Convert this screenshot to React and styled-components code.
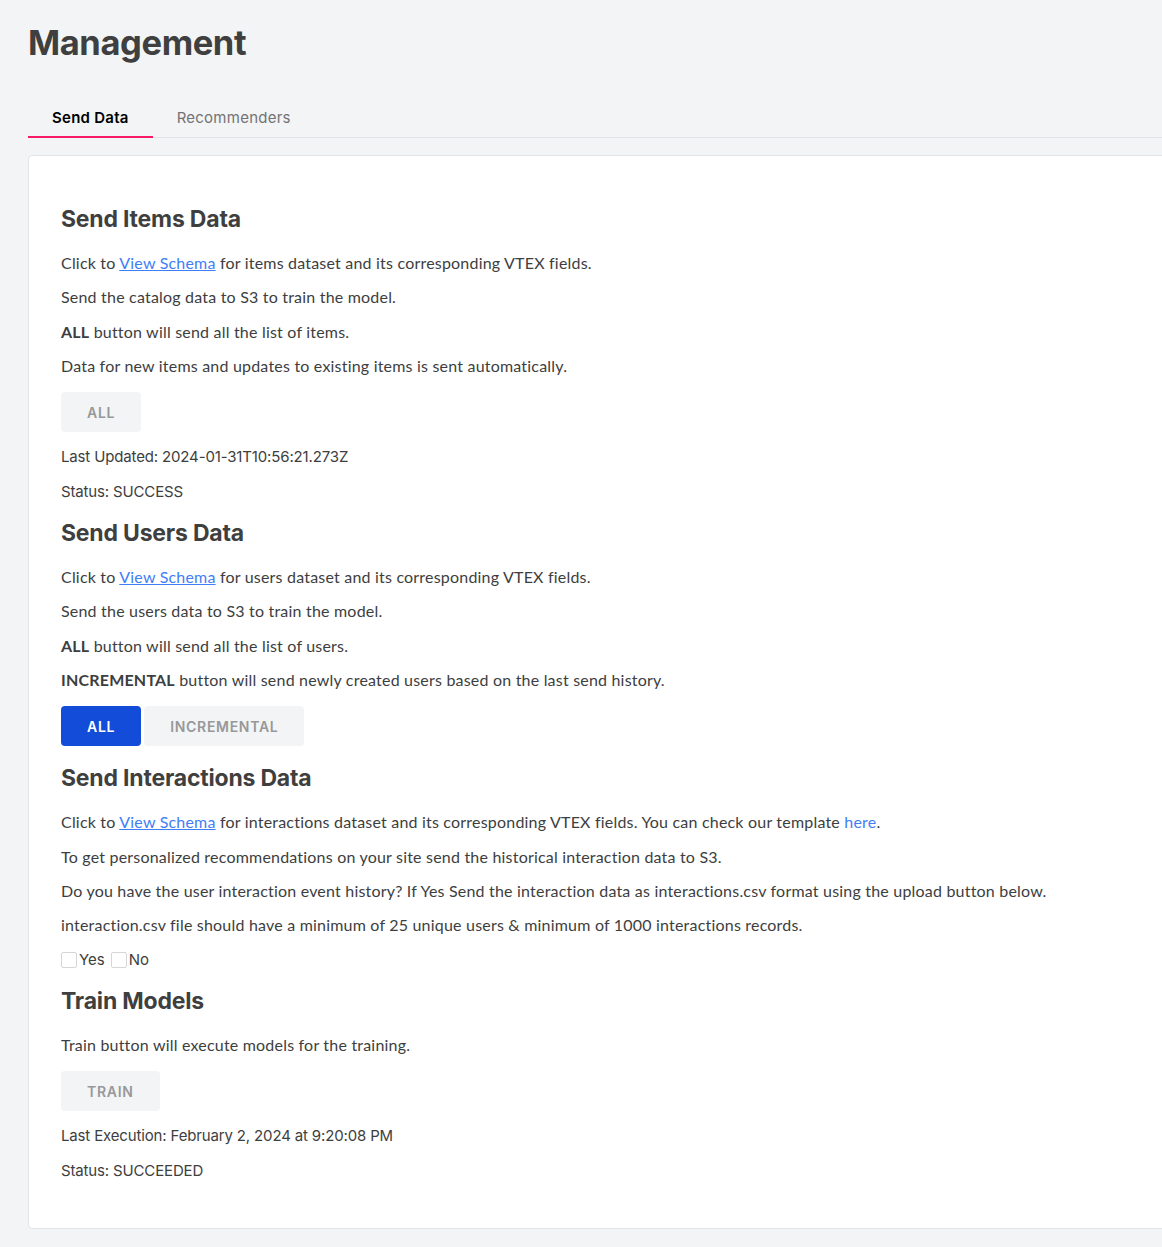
import React from "react";
import styled, { createGlobalStyle } from "styled-components";

const Global = createGlobalStyle`
  html, body { margin: 0; padding: 0; background: #f3f4f6; }
  body { font-family: Lato, "Noto Sans", sans-serif; color: #3d3e40; overflow-x: hidden; }
  * { box-sizing: border-box; }
`;

const Page = styled.div`
  overflow: hidden;
  min-height: 1247px;
  padding: 0 0 19px 28px;
`;

const Inner = styled.div`
  width: 1200px;
`;

const Title = styled.h1`
  margin: 0;
  padding-top: 21px;
  font-size: 34.5px;
  line-height: 44px;
  font-weight: 700;
  color: #3f3f40;
  font-family: Inter, Lato, sans-serif;
  letter-spacing: -0.4px;
`;

const Tabs = styled.div`
  display: flex;
  margin-top: 33px;
  border-bottom: 1px solid #e0e2e7;
`;

const Tab = styled.button`
  border: 0;
  background: none;
  padding: 0 24px;
  height: 40px;
  font-family: Inter, Lato, sans-serif;
  font-size: 15px;
  letter-spacing: 0.25px;
  font-weight: ${(p) => (p.$active ? 600 : 400)};
  color: ${(p) => (p.$active ? "#000" : "#727273")};
  border-bottom: 2px solid ${(p) => (p.$active ? "#f71963" : "transparent")};
  margin-bottom: -1px;
  cursor: pointer;
`;

const Card = styled.div`
  margin-top: 17px;
  background: #fff;
  border: 1px solid #e3e4e6;
  border-radius: 4px;
  padding: 33px 32px 34px;
`;

const ButtonRow = styled.div`
  display: flex;
  gap: 3px;
  margin: 15px 0 14px;
`;

const Heading = styled.h2`
  margin: 16px 0 19px;
  font-family: Inter, Lato, sans-serif;
  font-size: 23px;
  line-height: 28px;
  font-weight: 700;
  color: #3f3f40;
  letter-spacing: -0.2px;

  ${ButtonRow} + & {
    margin-top: 18px;
  }
`;

const P = styled.p`
  margin: 0 0 12px;
  font-size: 16px;
  line-height: 22.33px;
  letter-spacing: 0.2px;
  color: #3d3e40;
`;

const Link = styled.a`
  color: #3f7ef5;
  text-decoration: ${(p) => (p.$plain ? "none" : "underline")};
  cursor: pointer;
`;

const Button = styled.button`
  height: 40px;
  min-width: 80px;
  padding: 0 26px;
  border: 0;
  border-radius: 4px;
  font-family: Inter, Lato, sans-serif;
  font-size: 14px;
  letter-spacing: 0.7px;
  font-weight: 600;
  text-transform: uppercase;
  background: ${(p) => (p.$primary ? "#134cd8" : "#f2f4f5")};
  color: ${(p) => (p.$primary ? "#fff" : "#979899")};
  cursor: ${(p) => (p.$primary ? "pointer" : "default")};
`;

const Meta = styled(P)`
  font-family: Inter, Lato, sans-serif;
  font-size: 15px;
  letter-spacing: -0.15px;
`;

const CheckRow = styled.div`
  display: flex;
  align-items: center;
  height: 22.33px;
  margin-bottom: 12px;
  font-size: 15px;
  color: #3d3e40;
`;

const Box = styled.span`
  width: 16px;
  height: 16px;
  border: 1px solid #d5d6d8;
  border-radius: 2px;
  margin-right: 2px;
  background: #fff;
`;

const CheckLabel = styled.label`
  display: flex;
  align-items: center;
  margin-right: 6px;
  font-family: Inter, Lato, sans-serif;
`;

export default function App() {
  return (
    <Page>
      <Global />
      <Inner>
        <Title>Management</Title>
        <Tabs>
          <Tab $active>Send Data</Tab>
          <Tab>Recommenders</Tab>
        </Tabs>
        <Card>
          <Heading>Send Items Data</Heading>
          <P>
            Click to <Link>View Schema</Link> for items dataset and its corresponding VTEX fields.
          </P>
          <P>Send the catalog data to S3 to train the model.</P>
          <P>
            <b>ALL</b> button will send all the list of items.
          </P>
          <P>Data for new items and updates to existing items is sent automatically.</P>
          <ButtonRow>
            <Button>All</Button>
          </ButtonRow>
          <Meta>Last Updated: 2024-01-31T10:56:21.273Z</Meta>
          <Meta>Status: SUCCESS</Meta>

          <Heading>Send Users Data</Heading>
          <P>
            Click to <Link>View Schema</Link> for users dataset and its corresponding VTEX fields.
          </P>
          <P>Send the users data to S3 to train the model.</P>
          <P>
            <b>ALL</b> button will send all the list of users.
          </P>
          <P>
            <b>INCREMENTAL</b> button will send newly created users based on the last send history.
          </P>
          <ButtonRow>
            <Button $primary>All</Button>
            <Button>Incremental</Button>
          </ButtonRow>

          <Heading>Send Interactions Data</Heading>
          <P>
            Click to <Link>View Schema</Link> for interactions dataset and its corresponding VTEX fields. You can
            check our template <Link $plain>here</Link>.
          </P>
          <P>To get personalized recommendations on your site send the historical interaction data to S3.</P>
          <P>
            Do you have the user interaction event history? If Yes Send the interaction data as interactions.csv
            format using the upload button below.
          </P>
          <P>interaction.csv file should have a minimum of 25 unique users &amp; minimum of 1000 interactions records.</P>
          <CheckRow>
            <CheckLabel>
              <Box />
              Yes
            </CheckLabel>
            <CheckLabel>
              <Box />
              No
            </CheckLabel>
          </CheckRow>

          <Heading>Train Models</Heading>
          <P>Train button will execute models for the training.</P>
          <ButtonRow>
            <Button>Train</Button>
          </ButtonRow>
          <Meta>Last Execution: February 2, 2024 at 9:20:08 PM</Meta>
          <Meta>Status: SUCCEEDED</Meta>
        </Card>
      </Inner>
    </Page>
  );
}
